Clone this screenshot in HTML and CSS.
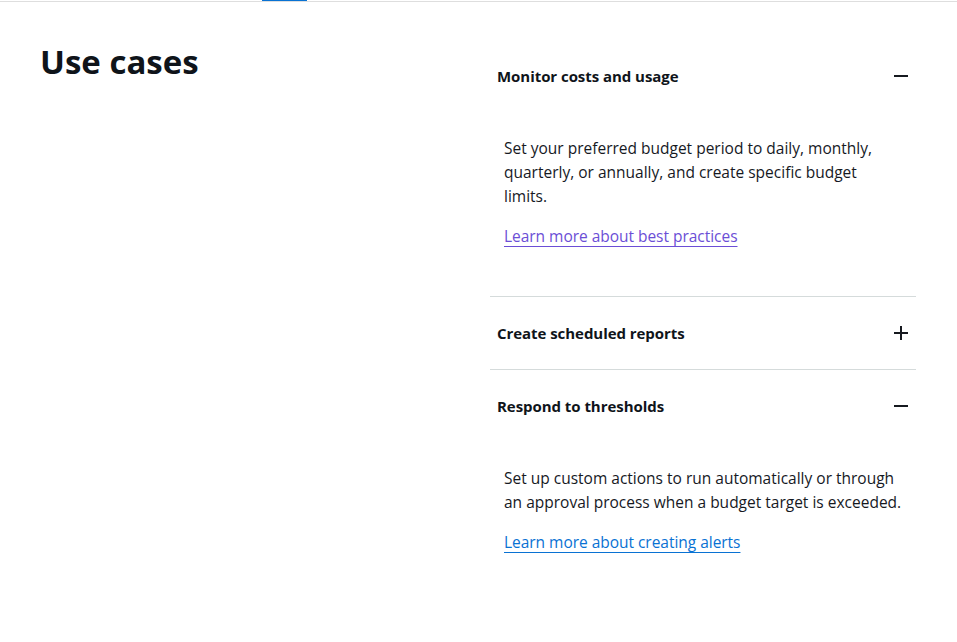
FILE: index.html
```html
<!DOCTYPE html>
<html lang="en">
<head>
<meta charset="utf-8">
<title>Use cases</title>
<link rel="stylesheet" href="styles.css">
</head>
<body>
<div class="tabbar"><span class="tab-indicator"></span></div>
<main class="section">
  <h2 class="section-title">Use cases</h2>
  <div class="accordion">
    <div class="acc-item">
      <div class="acc-header">
        <span class="acc-title">Monitor costs and usage</span>
        <svg class="acc-icon" width="16" height="16" viewBox="0 0 16 16"><path d="M1 8h14" stroke="#16191f" stroke-width="2" fill="none"/></svg>
      </div>
      <div class="acc-body">
        <p class="acc-text">Set your preferred budget period to daily, monthly, quarterly, or annually, and create specific budget limits.</p>
        <a class="acc-link visited" href="#">Learn more about best practices</a>
      </div>
    </div>
    <div class="acc-item">
      <div class="acc-header">
        <span class="acc-title">Create scheduled reports</span>
        <svg class="acc-icon" width="16" height="16" viewBox="0 0 16 16"><path d="M1 8h14M8 1v14" stroke="#16191f" stroke-width="2" fill="none"/></svg>
      </div>
    </div>
    <div class="acc-item">
      <div class="acc-header">
        <span class="acc-title">Respond to thresholds</span>
        <svg class="acc-icon" width="16" height="16" viewBox="0 0 16 16"><path d="M1 8h14" stroke="#16191f" stroke-width="2" fill="none"/></svg>
      </div>
      <div class="acc-body">
        <p class="acc-text">Set up custom actions to run automatically or through an approval process when a budget target is exceeded.</p>
        <a class="acc-link" href="#">Learn more about creating alerts</a>
      </div>
    </div>
  </div>
</main>
</body>
</html>
```
FILE: styles.css
```css
* { box-sizing: border-box; }
html, body { margin: 0; padding: 0; background: #fff; }
body {
  font-family: "Open Sans", "Noto Sans", Arial, sans-serif;
  color: #16191f;
  width: 957px;
}
.tabbar {
  height: 2px;
  border-bottom: 1px solid #dedede;
  display: flex;
  padding-left: 262px;
}
.tab-indicator {
  display: block;
  width: 45px;
  height: 1px;
  background: #0972d3;
}
.section {
  display: grid;
  grid-template-columns: 450px 426px;
  padding: 38px 41px 0 40px;
}
.section-title {
  margin: 0;
  font-size: 33px;
  line-height: 44px;
  font-weight: 700;
  color: #0f141a;
}
.accordion { display: flex; flex-direction: column; }
.acc-item + .acc-item { border-top: 1px solid #d5dbdb; }
.acc-header {
  height: 72px;
  padding: 0 7px;
  display: flex;
  align-items: center;
  justify-content: space-between;
}
.acc-title {
  font-size: 15px;
  font-weight: 700;
  color: #0f141a;
  letter-spacing: -0.05px;
}
.acc-icon { display: block; }
.acc-body { padding: 24px 14px 48px 14px; }
.acc-text {
  margin: 0 0 16px;
  font-size: 15.5px;
  line-height: 24px;
}
.acc-link {
  font-size: 15.5px;
  line-height: 24px;
  letter-spacing: -0.03px;
  color: #0972d3;
  text-decoration: underline;
  text-underline-offset: 4px;
}
.acc-link.visited { color: #6b4ed6; }
```
